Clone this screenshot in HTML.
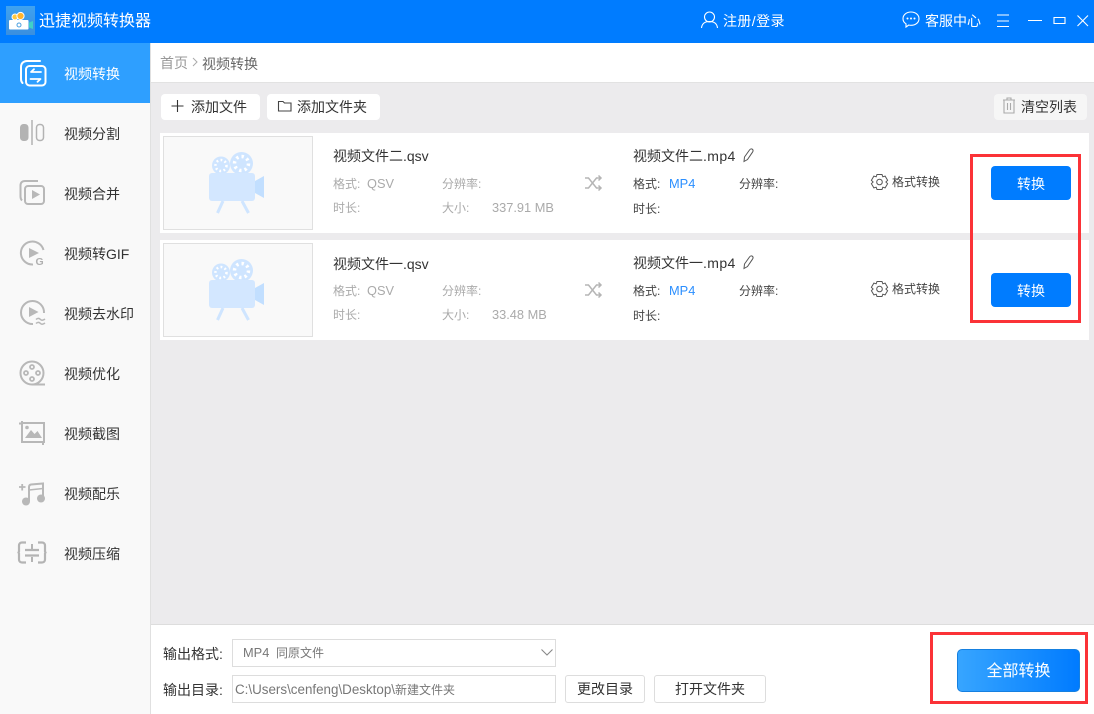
<!DOCTYPE html>
<html lang="zh"><head><meta charset="utf-8"><title>迅捷视频转换器</title>
<style>
*{box-sizing:border-box}
html,body{margin:0;padding:0}
body{position:relative;width:1094px;height:714px;overflow:hidden;background:#ecebed;font-family:"Liberation Sans","Noto Sans CJK SC",sans-serif;color:#333}
.b{position:absolute}
.t{position:absolute;white-space:nowrap;line-height:20px;height:20px;font-size:14px}
.s{font-size:12px}
.g{color:#aaa}
.d{color:#444}
.w{color:#fff}
.l{font-size:12.8px}
.tb{position:absolute;top:94px;height:26px;background:#fff;border-radius:4px}
.card{position:absolute;left:160px;width:929px;background:#fff}
.thumb{position:absolute;left:163px;width:150px;height:94px;background:#f9f9f9;border:1px solid #e0e0e0}
.btn{position:absolute;left:991px;width:80px;height:34px;background:#007cff;border-radius:4px;color:#fff;font-size:14px;line-height:36px;text-align:center}
.red{position:absolute;border:3px solid #fb3237}
.inp{position:absolute;left:232px;width:324px;height:28px;border:1px solid #ddd;background:#fff}
.ob{position:absolute;top:675px;height:28px;border:1px solid #ddd;border-radius:3px;background:#fff;font-size:14px;line-height:27px;text-align:center;color:#333}
svg{position:absolute;left:0;top:0}
</style></head><body>
<div class="b" style="left:0;top:0;width:1094px;height:43px;background:#007cff"></div>
<div class="b" style="left:0;top:43px;width:151px;height:671px;background:#f9f9f9;border-right:1px solid #e0e0e0"></div>
<div class="b" style="left:0;top:43px;width:150px;height:60px;background:#2e9fff"></div>
<div class="b" style="left:151px;top:43px;width:943px;height:40px;background:#fff;border-bottom:1px solid #e2e2e2"></div>
<div class="b" style="left:6px;top:6px;width:29px;height:29px;background:linear-gradient(180deg,#3fa2f0,#3a8fdf)"></div>

<div class="t w" style="left:39px;top:12px;font-size:16px">迅捷视频转换器</div>
<div class="t w" style="left:723px;top:11px;letter-spacing:.4px">注册/登录</div>
<div class="t w" style="left:925px;top:11px">客服中心</div>

<div class="t w" style="left:64px;top:64px">视频转换</div>
<div class="t" style="left:64px;top:124px">视频分割</div>
<div class="t" style="left:64px;top:184px">视频合并</div>
<div class="t" style="left:64px;top:244px">视频转GIF</div>
<div class="t" style="left:64px;top:304px">视频去水印</div>
<div class="t" style="left:64px;top:364px">视频优化</div>
<div class="t" style="left:64px;top:424px">视频截图</div>
<div class="t" style="left:64px;top:484px">视频配乐</div>
<div class="t" style="left:64px;top:544px">视频压缩</div>

<div class="t" style="left:160px;top:53px;color:#999">首页</div>
<div class="t" style="left:202px;top:54px;color:#666">视频转换</div>

<div class="tb" style="left:161px;width:99px"></div>
<div class="tb" style="left:267px;width:113px"></div>
<div class="tb" style="left:994px;width:93px;background:#f6f6f6"></div>
<div class="t" style="left:191px;top:97px">添加文件</div>
<div class="t" style="left:297px;top:97px">添加文件夹</div>
<div class="t" style="left:1021px;top:97px">清空列表</div>

<div class="card" style="top:133px;height:100px"></div>
<div class="card" style="top:240px;height:100px"></div>
<div class="thumb" style="top:136px"></div>
<div class="thumb" style="top:243px"></div>

<div class="t" style="left:333px;top:146px">视频文件二.qsv</div>
<div class="t s g" style="left:333px;top:174px">格式:</div>
<div class="t s g l" style="left:367px;top:174px">QSV</div>
<div class="t s g" style="left:442px;top:174px">分辨率:</div>
<div class="t s g" style="left:333px;top:198px">时长:</div>
<div class="t s g" style="left:442px;top:198px">大小:</div>
<div class="t s g l" style="left:492px;top:198px">337.91 MB</div>

<div class="t" style="left:333px;top:254px">视频文件一.qsv</div>
<div class="t s g" style="left:333px;top:281px">格式:</div>
<div class="t s g l" style="left:367px;top:281px">QSV</div>
<div class="t s g" style="left:442px;top:281px">分辨率:</div>
<div class="t s g" style="left:333px;top:305px">时长:</div>
<div class="t s g" style="left:442px;top:305px">大小:</div>
<div class="t s g l" style="left:492px;top:305px">33.48 MB</div>

<div class="t" style="left:633px;top:146px">视频文件二<span style="letter-spacing:.4px">.mp4</span></div>
<div class="t s d" style="left:633px;top:174px">格式:</div>
<div class="t s l" style="left:669px;top:174px;color:#2b8fff">MP4</div>
<div class="t s d" style="left:739px;top:174px">分辨率:</div>
<div class="t s d" style="left:633px;top:199px">时长:</div>
<div class="t s d" style="left:892px;top:172px">格式转换</div>

<div class="t" style="left:633px;top:253px">视频文件一<span style="letter-spacing:.4px">.mp4</span></div>
<div class="t s d" style="left:633px;top:281px">格式:</div>
<div class="t s l" style="left:669px;top:281px;color:#2b8fff">MP4</div>
<div class="t s d" style="left:739px;top:281px">分辨率:</div>
<div class="t s d" style="left:633px;top:306px">时长:</div>
<div class="t s d" style="left:892px;top:279px">格式转换</div>

<div class="btn" style="top:166px">转换</div>
<div class="btn" style="top:273px">转换</div>

<div class="b" style="left:151px;top:624px;width:943px;height:90px;background:#fff;border-top:1px solid #ddd"></div>
<div class="t" style="left:163px;top:644px">输出格式:</div>
<div class="t" style="left:163px;top:680px">输出目录:</div>
<div class="inp" style="top:639px"></div>
<div class="inp" style="top:675px"></div>
<div class="t s" style="left:243px;top:643px;color:#777"><span class="l">MP4</span>&nbsp;&nbsp;同原文件</div>
<div class="t s" style="left:235px;top:680px;color:#777"><span style="font-size:13.400px">C:\Users\cenfeng\Desktop\</span>新建文件夹</div>
<div class="ob" style="left:565px;width:80px">更改目录</div>
<div class="ob" style="left:654px;width:112px">打开文件夹</div>

<div class="b" style="left:957px;top:649px;width:123px;height:43px;border-radius:5px;background:linear-gradient(90deg,#37a5ff,#007bff);border:1px solid #1680e0;color:#fff;font-size:16px;line-height:43px;text-align:center">全部转换</div>

<div class="red" style="left:970px;top:154px;width:111px;height:169px"></div>
<div class="red" style="left:930px;top:632px;width:158px;height:72px"></div>

<svg width="1094" height="714" viewBox="0 0 1094 714" fill="none">
<!-- logo -->
<rect x="9" y="20" width="19.500" height="9.500" rx="1" fill="#fff"/>
<path d="M29 22.500l4-1.500v8l-4-1.500z" fill="#3fd0c8"/>
<circle cx="15" cy="17" r="3" fill="#ffc83d" stroke="#fff"/><circle cx="20.500" cy="16" r="3.600" fill="#ffb52e" stroke="#fff"/>
<circle cx="19" cy="25" r="2" stroke="#4a9fe0"/>
<!-- top right -->
<g stroke="#fff" stroke-width="1.100">
<circle cx="709.500" cy="17" r="5"/>
<path d="M701.500 28c.5-4.500 3.500-6.500 8-6.500s7.500 2 8 6.500"/>
<path d="M911 12c4.600 0 8 2.900 8 6.700s-3.400 6.600-8 6.600c-.8 0-1.500-.1-2.200-.3l-2.800 2v-3.200c-1.900-1.200-3-3-3-5.100 0-3.800 3.400-6.700 8-6.700z"/>
<path d="M997 15h12M997 21h12M997 26.500h12M1028 20.500h14M1054 17.500h11v6h-11zM1077.500 15.500l10.500 10.500M1088 15.500l-10.500 10.500"/>
</g>
<g fill="#fff"><circle cx="907.500" cy="18.500" r="1"/><circle cx="911" cy="18.500" r="1"/><circle cx="914.500" cy="18.500" r="1"/></g>
<!-- active sidebar icon -->
<g stroke="#fff" stroke-width="2" stroke-linecap="round" stroke-linejoin="round">
<rect x="26" y="66" width="19.500" height="19.500" rx="3.500"/>
<path d="M40 61H27c-3.500 0-6 2.300-6 6v12c0 2 .5 3 1.500 4"/>
<path d="M41 72H31l3-2.800M30.500 79h10l-3 2.800" stroke-width="1.800"/>
</g>
<!-- split -->
<rect x="20" y="124" width="8.500" height="17" rx="3.500" fill="#b3b3b3"/>
<path d="M32 120v25" stroke="#b3b3b3" stroke-width="1.500"/>
<rect x="36.500" y="124.500" width="7" height="16" rx="3" stroke="#b3b3b3" stroke-width="1.500"/>
<!-- merge -->
<g stroke="#b8b8b8" stroke-width="2">
<rect x="25" y="186" width="19" height="18" rx="3"/>
<path d="M38 181H25c-3 0-4.500 1.800-4.500 4.500v11c0 2 .5 3 1.500 4"/>
</g>
<path d="M32 190l8 4.500-8 4.500z" fill="#b8b8b8"/>
<!-- gif -->
<path d="M33 264.500a11.500 11.500 0 1 1 10.500-14.500" stroke="#b8b8b8" stroke-width="2"/>
<path d="M29 248l10 5-10 5z" fill="#b8b8b8"/>
<text x="35.500" y="265" font-family="Liberation Sans" font-size="10.500" font-weight="bold" fill="#b0b0b0">G</text>
<!-- watermark -->
<path d="M33 324a11.500 11.500 0 1 1 11-11" stroke="#b8b8b8" stroke-width="2"/>
<path d="M29 307l9.500 5-9.500 5z" fill="#b8b8b8"/>
<path d="M36 319.500c2-2 3.500-1 4.500 0s2.500 1 4.500-.5M36 323.500c2-2 3.500-1 4.500 0s2.500 1 4.500-.5" stroke="#b8b8b8" stroke-width="1.500"/>
<!-- optimize -->
<circle cx="32" cy="373" r="11.500" stroke="#b8b8b8" stroke-width="2"/>
<path d="M32 384.500h13" stroke="#b8b8b8" stroke-width="2"/>
<g stroke="#b8b8b8" stroke-width="1.800"><circle cx="32" cy="367" r="2"/><circle cx="32" cy="379" r="2"/><circle cx="26" cy="373" r="2"/><circle cx="38" cy="373" r="2"/></g>
<!-- screenshot -->
<path d="M22 421v21h22v-19H21M43 442v3" stroke="#b8b8b8" stroke-width="2"/>
<path d="M19 423.500h3" stroke="#b8b8b8" stroke-width="2"/>
<path d="M25 438l6-8 3.500 4 3-3 4.500 7z" fill="#b8b8b8"/><circle cx="27" cy="427.500" r="1.800" fill="#b8b8b8"/>
<!-- music -->
<path d="M19 487h6.500M22.200 484v6.500" stroke="#b8b8b8" stroke-width="1.800"/>
<circle cx="26" cy="501.500" r="4" fill="#b8b8b8"/><circle cx="41" cy="498.500" r="4" fill="#b8b8b8"/>
<path d="M29 501v-14c0-1.500.7-2.300 2-2.500l12-1v15" stroke="#b8b8b8" stroke-width="2"/>
<path d="M29 490l14-1.500" stroke="#b8b8b8" stroke-width="1.500"/>
<!-- compress -->
<path d="M26 542.500h-4c-1.700 0-3 1-3 3v6l-.5 1 .5 1v6c0 2 1.300 3 3 3h4M38 542.500h4c1.700 0 3 1 3 3v6l.5 1-.5 1v6c0 2-1.300 3-3 3h-4" stroke="#b4b4b4" stroke-width="2.200"/>
<path d="M25 550h14M25 555.500h14" stroke="#b4b4b4" stroke-width="2.200"/>
<path d="M32 544v5M32 557v5" stroke="#b4b4b4" stroke-width="2"/>
<!-- breadcrumb, toolbar -->
<path d="M193 58l4 4-4 4" stroke="#aaa"/>
<path d="M177.500 100v12M171.500 106h12" stroke="#333" stroke-width="1.100"/>
<path d="M278.500 111v-9.500h4.500l1.500 1.500h6.500v8z" stroke="#444" stroke-width="1.100"/>
<path d="M1003 100h12M1007 100v-2h4v2M1004 100v13h10v-13M1007.500 103v7M1010.500 103v7" stroke="#aaa" stroke-width="1.100"/>
<!-- camera icons -->
<g>
<circle cx="221" cy="165.500" r="9" fill="#cfe5ff"/><circle cx="241.500" cy="163.500" r="11.500" fill="#cfe5ff"/>
<circle cx="221" cy="165.500" r="5.500" stroke="#fff" stroke-width="2.500" pathLength="24" stroke-dasharray="1.300 1.700"/>
<circle cx="241.500" cy="163.500" r="7" stroke="#fff" stroke-width="3.500" pathLength="24" stroke-dasharray="1.300 1.700"/>
<rect x="209" y="173" width="46" height="28" rx="3" fill="#d3e7ff"/>
<path d="M255 181l9-5v22l-9-5z" fill="#c2dfff"/>
<path d="M223 201l-5.500 12M242 201l6.500 12" stroke="#cfe5ff" stroke-width="3"/>
</g>
<g transform="translate(0,107)">
<circle cx="221" cy="165.500" r="9" fill="#cfe5ff"/><circle cx="241.500" cy="163.500" r="11.500" fill="#cfe5ff"/>
<circle cx="221" cy="165.500" r="5.500" stroke="#fff" stroke-width="2.500" pathLength="24" stroke-dasharray="1.300 1.700"/>
<circle cx="241.500" cy="163.500" r="7" stroke="#fff" stroke-width="3.500" pathLength="24" stroke-dasharray="1.300 1.700"/>
<rect x="209" y="173" width="46" height="28" rx="3" fill="#d3e7ff"/>
<path d="M255 181l9-5v22l-9-5z" fill="#c2dfff"/>
<path d="M223 201l-5.500 12M242 201l6.500 12" stroke="#cfe5ff" stroke-width="3"/>
</g>
<!-- shuffle -->
<g stroke="#b5b5b5" stroke-width="1.500">
<path d="M585 178h3.500l8 10h4M585 188h3.500l8-10h4M598.500 175.500l2.500 2.500-2.500 2.500M598.500 185.500l2.500 2.500-2.500 2.500"/>
<path transform="translate(0,107)" d="M585 178h3.500l8 10h4M585 188h3.500l8-10h4M598.500 175.500l2.500 2.500-2.500 2.500M598.500 185.500l2.500 2.500-2.500 2.500"/>
</g>
<!-- pencil -->
<g stroke="#555" stroke-width="1">
<path d="M744 161.500l.5-4.500 5-7c.8-1.200 2-1.400 2.800-.8s1 1.800.2 3l-5 7.300z"/>
<path transform="translate(0,107)" d="M744 161.500l.5-4.500 5-7c.8-1.200 2-1.400 2.800-.8s1 1.800.2 3l-5 7.300z"/>
</g>
<!-- gear -->
<g stroke="#555" stroke-width="1">
<path d="M877 174.500h5l.8 2.300 2.300-.7 2.500 4.200-1.700 1.700 1.700 1.700-2.500 4.200-2.300-.7-.8 2.300h-5l-.8-2.300-2.300.7-2.500-4.200 1.700-1.700-1.700-1.700 2.500-4.200 2.300.7z"/>
<circle cx="879.500" cy="182" r="2.800"/>
<path transform="translate(0,107)" d="M877 174.500h5l.8 2.300 2.300-.7 2.500 4.200-1.700 1.700 1.700 1.700-2.500 4.200-2.300-.7-.8 2.300h-5l-.8-2.300-2.300.7-2.500-4.200 1.700-1.700-1.700-1.700 2.500-4.200 2.300.7z"/>
<circle cx="879.500" cy="289" r="2.800"/>
</g>
<!-- chevron -->
<path d="M541.500 649.500l5.500 5.500 5.500-5.500" stroke="#888" stroke-width="1.100"/>
</svg>
</body></html>
